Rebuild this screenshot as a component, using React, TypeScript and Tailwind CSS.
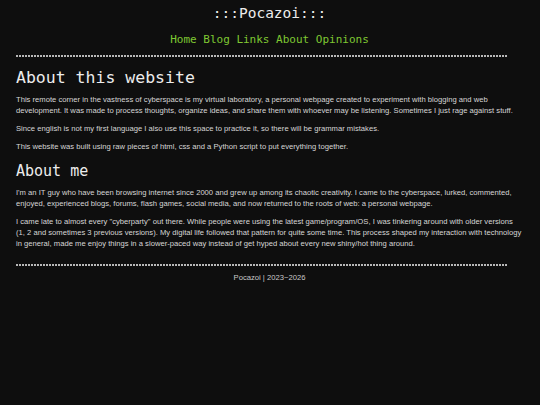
const mono = "font-['DejaVu_Sans_Mono',monospace]"

function Rule() {
  return (
    <div className="w-[491px] h-[2px] bg-[repeating-linear-gradient(90deg,#b8b8b8_0_2px,transparent_2px_3px)]" />
  )
}

const links = ['Home', 'Blog', 'Links', 'About', 'Opinions']

export default function App() {
  return (
    <div className="min-h-[405px] w-full bg-[#0e0e0e] pl-4 pr-[17px] text-[#d6d6d6] font-['Liberation_Sans',Arial,sans-serif]">
      <header>
        <div className={`h-[28px] flex items-center justify-center text-[14.5px] text-[#ececec] ${mono}`}>
          :::Pocazoi:::
        </div>
        <nav className={`mt-[4px] flex justify-center gap-[6.6px] text-[11px] leading-[16px] text-[#7fc832] ${mono}`}>
          {links.map((l) => (
            <a key={l} href="#">{l}</a>
          ))}
        </nav>
        <div className="mt-[7px]">
          <Rule />
        </div>
      </header>

      <main className="text-[7.65px] leading-[11px]">
        <h1 className={`mt-[10px] text-[16.5px] leading-[22px] text-[#ececec] ${mono}`}>About this website</h1>
        <p className="mt-[5px]">
          This remote corner in the vastness of cyberspace is my virtual laboratory, a personal webpage created to experiment with blogging and web development. It was made to process thoughts, organize ideas, and share them with whoever may be listening. Sometimes I just rage against stuff.
        </p>
        <p className="mt-[7px]">
          Since english is not my first language I also use this space to practice it, so there will be grammar mistakes.
        </p>
        <p className="mt-[7px]">
          This website was built using raw pieces of html, css and a Python script to put everything together.
        </p>

        <h2 className={`mt-[9px] text-[15px] leading-[20px] text-[#ececec] ${mono}`}>About me</h2>
        <p className="mt-[6px]">
          I'm an IT guy who have been browsing internet since 2000 and grew up among its chaotic creativity. I came to the cyberspace, lurked, commented, enjoyed, experienced blogs, forums, flash games, social media, and now returned to the roots of web: a personal webpage.
        </p>
        <p className="mt-[7px]">
          I came late to almost every "cyberparty" out there. While people were using the latest game/program/OS, I was tinkering around with older versions (1, 2 and sometimes 3 previous versions). My digital life followed that pattern for quite some time. This process shaped my interaction with technology in general, made me enjoy things in a slower-paced way instead of get hyped about every new shiny/hot thing around.
        </p>
      </main>

      <footer className="mt-[15px]">
        <Rule />
        <p className="mt-[6px] text-center text-[7.65px] leading-[11px] text-[#c8c8c8]">Pocazoi | 2023~2026</p>
      </footer>
    </div>
  )
}
